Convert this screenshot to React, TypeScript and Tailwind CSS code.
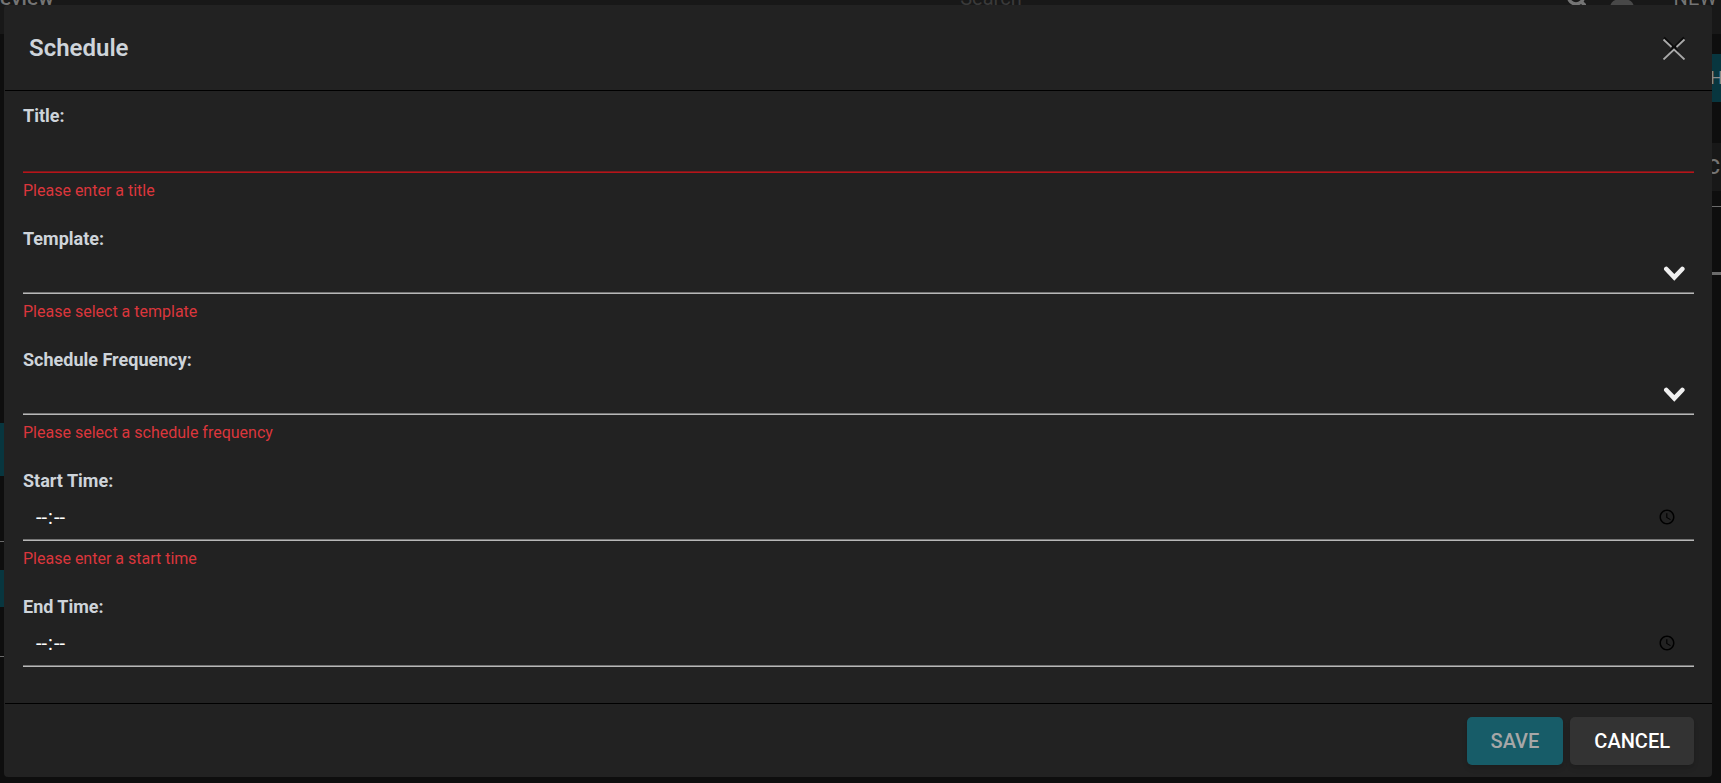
import React from "react";

const labelClass = "block text-[18px] leading-[27px] font-bold text-[#ced4da]";
const errorClass = "mt-[6px] text-[16px] leading-[24px] text-[#db363c]";
const boxClass = "block w-full border-b bg-transparent text-white outline-none";
const greyLine = "border-[#b8b8b8] shadow-[inset_0_-1px_0_#757575]";
const redLine = "border-[#b71419] shadow-[inset_0_-1px_0_#7c1a1d]";

function Field({ id, label, error, children }: { id: string; label: string; error?: string; children: React.ReactNode }) {
  return (
    <div>
      <label htmlFor={id} className={labelClass}>{label}</label>
      {children}
      {error && <p id={`${id}-error`} className={errorClass}>{error}</p>}
    </div>
  );
}

function SelectBox({ id }: { id: string }) {
  return (
    <div className="relative">
      <select id={id} defaultValue="" className={`${boxClass} ${greyLine} h-[42px] appearance-none pl-3 pr-12 text-[16px]`}>
        <option value=""></option>
      </select>
      <svg viewBox="0 0 22 16" className="pointer-events-none absolute right-[9px] top-[14px] h-4 w-[22px]" fill="none" stroke="#f0f0f0" strokeWidth="4.6" strokeLinecap="round">
        <path d="M3.3 3 11.3 11.4 19.3 3" />
      </svg>
    </div>
  );
}

function TimeBox({ id }: { id: string }) {
  return (
    <input
      id={id}
      type="time"
      className={`${boxClass} ${greyLine} h-[47px] pl-3 pr-[15px] text-[20px] [&::-webkit-datetime-edit-ampm-field]:hidden [&::-webkit-calendar-picker-indicator]:h-[18px] [&::-webkit-calendar-picker-indicator]:w-[18px]`}
    />
  );
}

function Backdrop() {
  return (
    <div className="flex h-full flex-col bg-[#0e0e0e] text-[20px] leading-6 text-[#747474]" aria-hidden="true">
      <div className="flex h-[34px] items-start bg-[#181818]">
        <div className="-mt-[14px] flex flex-1 items-center">
          <span className="flex-[58] text-[21px] font-medium">eview</span>
          <span className="text-[#3a3a3a]">Search</span>
          <div className="flex flex-[42] items-center justify-end gap-6 pr-1">
            <svg viewBox="0 0 20 20" className="h-5 w-5" fill="none" stroke="#747474" strokeWidth="3.4">
              <circle cx="10" cy="8.5" r="7.5" />
              <path d="m14.5 13 6 6" />
            </svg>
            <svg viewBox="0 0 24 24" className="h-6 w-6" fill="#484848">
              <circle cx="12" cy="6" r="6" />
              <path d="M0 21c1-6 5-8 12-8s11 2 12 8z" />
            </svg>
            <span className="ml-4">NEW</span>
          </div>
        </div>
      </div>
      <div className="flex flex-1 justify-between">
        <div className="flex w-1 flex-col overflow-hidden pt-[389px]">
          <div className="h-[53px] bg-[#08363f]" />
          <div className="mt-[65px] h-px bg-[#6b6b6b]" />
          <div className="mt-[28px] h-[37px] bg-[#08363f]" />
          <div className="mt-[49px] h-px bg-[#6b6b6b]" />
        </div>
        <div className="flex w-[9px] flex-col overflow-hidden pt-5">
          <div className="flex h-12 items-center bg-[#08363f] text-[18px] text-[#8a8a8a]"><span className="-ml-0.5">H</span></div>
          <div className="mt-[41px] flex h-12 items-center justify-end bg-[#181818] font-medium"><span className="pr-px">C</span></div>
          <div className="mt-[15px] h-px bg-[#6b6b6b]" />
          <div className="mt-[65px] h-[3px] bg-[#6b6b6b]" />
        </div>
      </div>
    </div>
  );
}

export default function App() {
  return (
    <div className="relative min-h-screen overflow-hidden font-[Roboto,sans-serif]">
      <div className="absolute inset-0"><Backdrop /></div>
      <div role="dialog" aria-labelledby="dialog-title" className="relative mt-[5px] mb-[6px] ml-1 mr-[9px] rounded-[4px] bg-[#222222]">
        <header className="ml-px flex h-[86px] items-center justify-between border-b border-black pl-6 pr-[26px]">
          <h1 id="dialog-title" className="text-[24px] leading-[36px] font-semibold text-[#ced4da]">Schedule</h1>
          <button type="button" aria-label="Close" className="h-6 w-6">
            <svg viewBox="0 0 24 24" className="h-6 w-6" fill="none">
              <path stroke="#0a0a0a" strokeWidth="2.2" d="M2 1.5 12 11.5 22 1.5M8 15.5 12 11.5 16 15.5" />
              <path stroke="#aaa" strokeWidth="1.8" d="M1.5 3.5 9.5 11M22.5 3.5 14.5 11M1.5 23.5 12 13.5 22.5 23.5" />
            </svg>
          </button>
        </header>
        <form className="flex flex-col gap-[22px] pl-[19px] pr-[18px] pt-[11px] pb-9">
          <Field id="title" label="Title:" error="Please enter a title">
            <input id="title" type="text" className={`${boxClass} ${redLine} h-[44px] px-3 text-[18px]`} />
          </Field>
          <Field id="template" label="Template:" error="Please select a template"><SelectBox id="template" /></Field>
          <Field id="frequency" label="Schedule Frequency:" error="Please select a schedule frequency"><SelectBox id="frequency" /></Field>
          <Field id="start" label="Start Time:" error="Please enter a start time"><TimeBox id="start" /></Field>
          <Field id="end" label="End Time:"><TimeBox id="end" /></Field>
        </form>
        <footer className="ml-px flex justify-end gap-[7px] border-t border-black pt-[13px] pb-3 pr-[18px]">
          <button type="button" disabled className="h-12 rounded-[5px] bg-[#175c68] px-6 text-[20px] font-medium text-[#a7a7a7] shadow-md">SAVE</button>
          <button type="button" className="h-12 rounded-[5px] bg-[#333333] px-6 text-[20px] font-medium text-white shadow-md">CANCEL</button>
        </footer>
      </div>
    </div>
  );
}
